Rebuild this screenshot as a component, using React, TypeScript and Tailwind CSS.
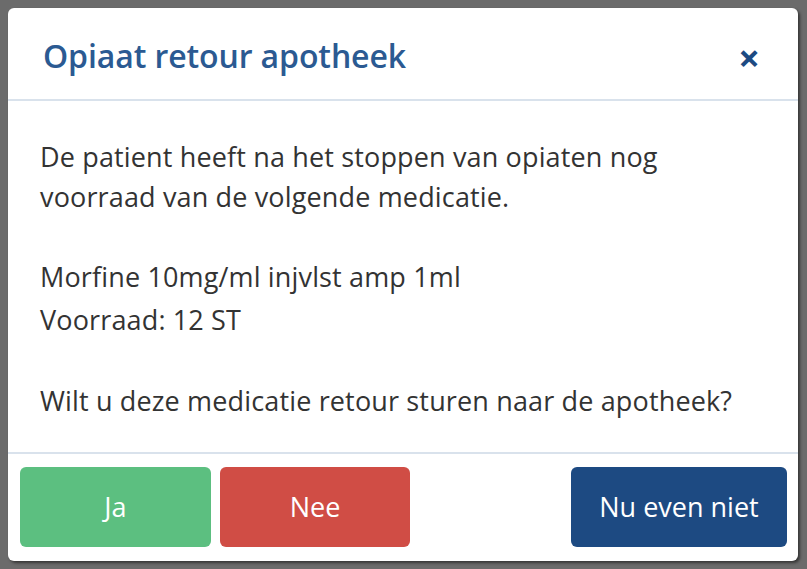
const font = { fontFamily: '"Open Sans", "Liberation Sans", sans-serif' };

const App = () => {
  return (
    <div
      className="w-[807px] h-[569px] bg-[#6b6b6b] pl-2 pt-2 overflow-hidden"
      style={font}
    >
      {/* Modal */}
      <div className="w-[790px] h-[553px] bg-white rounded-md flex flex-col shadow-[2px_2px_3px_rgba(0,0,0,0.5)]">
        {/* Header */}
        <div className="h-[93px] flex items-center justify-between pl-[35px] pr-[38px] border-b-2 border-[#d9e2ec]">
          <h1 className="text-[32px] font-semibold text-[#2b5a92] tracking-[-0.1px] pt-1">
            Opiaat retour apotheek
          </h1>
          <button className="text-[38px] font-bold text-[#1d4a82] leading-none pt-[6px]">
            ×
          </button>
        </div>

        {/* Body */}
        <div className="flex-1 px-8 pt-[36px] text-[27px] leading-[40px] tracking-[0.15px] text-[#333333]">
          <p>
            De patient heeft na het stoppen van opiaten nog
            <br />
            voorraad van de volgende medicatie.
          </p>
          <p className="mt-[40px]">
            Morfine 10mg/ml injvlst amp 1ml
            <br />
            <span className="inline-block pt-[3px]">Voorraad: 12 ST</span>
          </p>
          <p className="mt-[41px]">
            Wilt u deze medicatie retour sturen naar de apotheek?
          </p>
        </div>

        {/* Footer */}
        <div className="border-t-2 border-[#d9e2ec] flex items-center pl-3 pr-[11px] pt-[13px] pb-[14px]">
          <button className="w-[191px] h-[80px] rounded-md bg-[#5cbf80] text-white text-[27px]">
            Ja
          </button>
          <button className="w-[190px] h-[80px] rounded-md bg-[#d04d45] text-white text-[27px] ml-[9px]">
            Nee
          </button>
          <button className="w-[216px] h-[80px] rounded-md bg-[#1d4a82] text-white text-[27px] ml-auto">
            Nu even niet
          </button>
        </div>
      </div>
    </div>
  );
};

export default App;
